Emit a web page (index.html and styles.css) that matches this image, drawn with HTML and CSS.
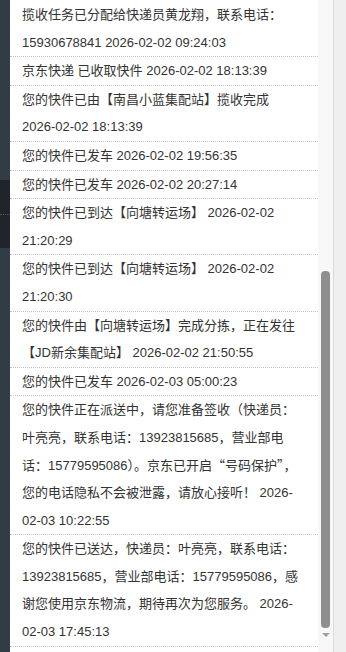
FILE: index.html
```html
<!DOCTYPE html>
<html lang="zh-CN">
<head>
<meta charset="utf-8">
<title>物流跟踪</title>
<link rel="stylesheet" href="styles.css">
</head>
<body>
<div class="page">
  <div class="mask">
    <div class="mask-top"></div>
    <div class="mask-band"><div class="mask-dots"></div></div>
    <div class="mask-bottom"></div>
  </div>
  <div class="panel">
    <ul class="track-list">
      <li>揽收任务已分配给快递员黄龙翔，联系电话：15930678841 2026-02-02 09:24:03</li>
      <li>京东快递 已收取快件 2026-02-02 18:13:39</li>
      <li>您的快件已由【南昌小蓝集配站】揽收完成 2026-02-02 18:13:39</li>
      <li>您的快件已发车 2026-02-02 19:56:35</li>
      <li>您的快件已发车 2026-02-02 20:27:14</li>
      <li>您的快件已到达【向塘转运场】 2026-02-02 21:20:29</li>
      <li>您的快件已到达【向塘转运场】 2026-02-02 21:20:30</li>
      <li>您的快件由【向塘转运场】完成分拣，正在发往【JD新余集配站】 2026-02-02 21:50:55</li>
      <li>您的快件已发车 2026-02-03 05:00:23</li>
      <li>您的快件正在派送中，请您准备签收（快递员：叶亮亮，联系电话：13923815685，营业部电话：15779595086）。京东已开启<span class="cjk">“</span>号码保护<span class="cjk">”</span>，您的电话隐私不会被泄露，请放心接听！ 2026-02-03 10:22:55</li>
      <li>您的快件已送达，快递员：叶亮亮，联系电话：13923815685，营业部电话：15779595086，感谢您使用京东物流，期待再次为您服务。 2026-02-03 17:45:13</li>
    </ul>
  </div>
  <div class="scrollbar">
    <div class="thumb"></div>
    <div class="arrow"></div>
  </div>
  <div class="divider"></div>
  <div class="outer"></div>
</div>
</body>
</html>
```
FILE: styles.css
```css
html, body {
  margin: 0;
  padding: 0;
}
body {
  background: #efefef;
  font-family: "Liberation Sans", "Noto Sans CJK SC", sans-serif;
  font-size: 13px;
  color: #333;
}
.page {
  display: flex;
  height: 652px;
  overflow: hidden;
}
.mask {
  width: 10px;
  display: flex;
  flex-direction: column;
  flex: none;
}
.mask-top {
  height: 180px;
  background: #323c46;
}
.mask-band {
  height: 68px;
  background: #1f252b;
  display: flex;
  flex-direction: column;
  justify-content: center;
}
.mask-dots {
  border-top: 1px dotted #4a525a;
}
.mask-bottom {
  flex: 1;
  background: #323c46;
}
.panel {
  width: 308px;
  flex: none;
  background: #fff;
  overflow: hidden;
}
.track-list {
  list-style: none;
  margin: 0;
  padding: 1px 0 0;
}
.track-list li {
  padding: 0 15px 0 12px;
  line-height: 27.6px;
  border-bottom: 1px dotted #c4c4c4;
}
.cjk {
  font-family: "Noto Sans CJK SC", sans-serif;
  line-height: 1;
}
.scrollbar {
  width: 15px;
  flex: none;
  background: #f8f8f8;
  display: flex;
  flex-direction: column;
  align-items: center;
}
.thumb {
  margin-top: 271px;
  width: 9px;
  height: 357px;
  background: #8e8e8e;
  border-radius: 4px;
}
.arrow {
  margin-top: 5px;
  width: 0;
  height: 0;
  border-left: 4px solid transparent;
  border-right: 4px solid transparent;
  border-top: 4px solid #a0a0a0;
}
.divider {
  width: 1px;
  flex: none;
  background: #dadada;
}
.outer {
  flex: 1;
  background: #efefef;
}
```
